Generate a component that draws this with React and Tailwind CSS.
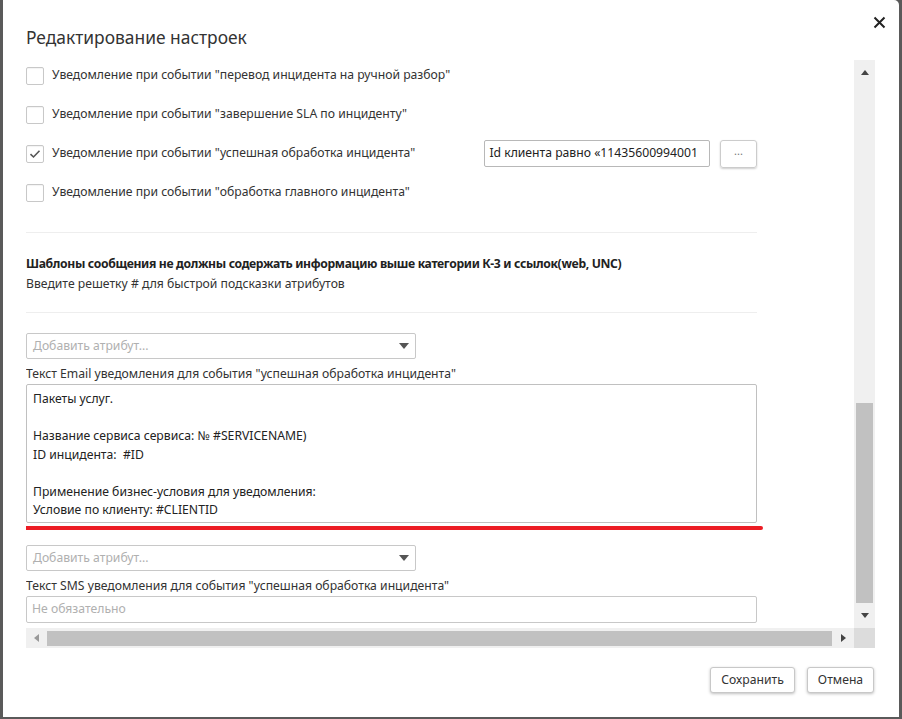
import React from "react";

const font = { fontFamily: '"Noto Sans", "Open Sans", sans-serif' };

function Checkbox({ checked }) {
  return (
    <div className="w-[18px] h-[18px] shrink-0 rounded-[2px] border border-[#c8c8c8] bg-white flex items-center justify-center shadow-[inset_0_1px_1px_rgba(0,0,0,0.05)]">
      {checked && (
        <svg width="12" height="10" viewBox="0 0 12 10">
          <path d="M1.5 5.2 L4.5 8 L10.5 1.8" fill="none" stroke="#555" strokeWidth="1.6" />
        </svg>
      )}
    </div>
  );
}

function Row({ label, checked, children }) {
  return (
    <div className="h-[39px] flex items-center">
      <Checkbox checked={checked} />
      <span className="ml-[8px] w-[425px] whitespace-nowrap">{label}</span>
      {children}
    </div>
  );
}

function SelectBox() {
  return (
    <div className="w-[390px] h-[26px] border border-[#c8c8c8] rounded-[2px] flex items-center justify-between pl-[6px] pr-[6px] text-[#b0b0b0]">
      <span>Добавить атрибут...</span>
      <svg width="10" height="6" viewBox="0 0 10 6"><path d="M0 0 H10 L5 6 Z" fill="#555" /></svg>
    </div>
  );
}

function Tri({ dir }) {
  const d = {
    up: "M0 5 L4 0 L8 5 Z",
    down: "M0 0 L8 0 L4 5 Z",
    left: "M5 0 L5 8 L0 4 Z",
    right: "M0 0 L5 4 L0 8 Z",
  }[dir];
  const vert = dir === "up" || dir === "down";
  return (
    <svg width={vert ? 8 : 5} height={vert ? 5 : 8} viewBox={vert ? "0 0 8 5" : "0 0 5 8"}>
      <path d={d} fill={dir === "left" ? "#999" : "#444"} />
    </svg>
  );
}

export default function App() {
  return (
    <div className="w-[902px] h-[719px] bg-[#5a5a5a] pl-[3px] pr-[3px] pb-[2px] text-[12.2px] text-[#333]" style={font}>
      <div className="w-full h-full bg-white rounded-tr-[5px] flex flex-col pl-[23px] pr-[24px]">
        {/* header */}
        <div className="h-[60px] flex items-start justify-between">
          <div className="mt-[24px] text-[17.4px] text-[#333] leading-[26px]">Редактирование настроек</div>
          <svg className="mt-[16px] -mr-[11px]" width="13" height="13" viewBox="0 0 13 13">
            <path d="M1.5 1.5 L11.5 11.5 M11.5 1.5 L1.5 11.5" stroke="#222" strokeWidth="2" />
          </svg>
        </div>
        {/* body */}
        <div className="flex flex-col">
          <div className="flex h-[568px]">
            <div className="w-[828px] overflow-hidden">
              <div className="w-[731px]">
                <div className="-mt-[4px]">
                  <Row label={'Уведомление при событии "перевод инцидента на ручной разбор"'} />
                  <Row label={'Уведомление при событии "завершение SLA по инциденту"'} />
                  <Row label={'Уведомление при событии "успешная обработка инцидента"'} checked>
                    <div className="ml-[8px] w-[226px] h-[27px] border border-[#b8b8b8] rounded-[2px] flex items-center px-[4px] overflow-hidden whitespace-nowrap text-[#222]">
                      Id клиента равно «11435600994001
                    </div>
                    <div className="ml-[10px] w-[37px] h-[28px] border border-[#ccc] rounded-[3px] shadow-[0_1px_2px_rgba(0,0,0,0.2)] flex items-center justify-center text-[#777] text-[11px] pb-[4px]">
                      ...
                    </div>
                  </Row>
                  <Row label={'Уведомление при событии "обработка главного инцидента"'} />
                </div>
                <div className="mt-[20px] border-t border-[#eeeeee]" />
                <div className="pt-[21px] font-bold leading-[20px] whitespace-nowrap text-[#222] tracking-[-0.35px]">
                  Шаблоны сообщения не должны содержать информацию выше категории К-3 и ссылок(web, UNC)
                </div>
                <div className="leading-[20px] whitespace-nowrap">Введите решетку # для быстрой подсказки атрибутов</div>
                <div className="mt-[18px] border-t border-[#eeeeee]" />
                <div className="mt-[20px]"><SelectBox /></div>
                <div className="mt-[5px] leading-[20px] whitespace-nowrap">Текст Email уведомления для события "успешная обработка инцидента"</div>
                <div className="h-[139px] border border-[#c0c0c0] rounded-[2px] px-[6px] pt-[5px] leading-[18.5px] text-[#222]">
                  <div>Пакеты услуг.</div>
                  <div>&nbsp;</div>
                  <div>Название сервиса сервиса: № #SERVICENAME)</div>
                  <div>ID инцидента:&nbsp; #ID</div>
                  <div>&nbsp;</div>
                  <div>Применение бизнес-условия для уведомления:</div>
                  <div>Условие по клиенту: #CLIENTID</div>
                </div>
                <div className="mt-[3px] -ml-[7px] w-[744px] h-[4px] rounded-full bg-[#ec1c24]" />
                <div className="mt-[15px]"><SelectBox /></div>
                <div className="mt-[5px] leading-[20px] whitespace-nowrap">Текст SMS уведомления для события "успешная обработка инцидента"</div>
                <div className="h-[27px] border border-[#c8c8c8] rounded-[2px] flex items-center px-[5px] text-[#b0b0b0]">Не обязательно</div>
              </div>
            </div>
            {/* vertical scrollbar */}
            <div className="w-[21px] bg-[#f0f0f0] flex flex-col items-center">
              <div className="h-[22px] flex items-center justify-center pt-[2px]"><Tri dir="up" /></div>
              <div className="flex-1 w-full flex flex-col px-[2px]">
                <div className="h-[321px]" />
                <div className="flex-1 bg-[#c1c1c1]" />
              </div>
              <div className="h-[25px] flex items-center justify-center"><Tri dir="down" /></div>
            </div>
          </div>
          {/* horizontal scrollbar */}
          <div className="flex h-[20px]">
            <div className="w-[828px] bg-[#f0f0f0] flex items-center">
              <div className="w-[21px] flex items-center justify-center"><Tri dir="left" /></div>
              <div className="w-[785px] h-[15px] bg-[#c1c1c1]" />
              <div className="flex-1 flex items-center justify-center"><Tri dir="right" /></div>
            </div>
            <div className="w-[21px] bg-[#dcdcdc]" />
          </div>
        </div>
        {/* footer */}
        <div className="flex justify-end gap-[12px] mt-[19px] pr-[1px]">
          <button className="w-[85px] h-[26px] border border-[#c8c8c8] rounded-[3px] shadow-[0_1px_3px_rgba(0,0,0,0.25)] text-[#333] bg-white">Сохранить</button>
          <button className="w-[67px] h-[26px] border border-[#c8c8c8] rounded-[3px] shadow-[0_1px_3px_rgba(0,0,0,0.25)] text-[#333] bg-white">Отмена</button>
        </div>
      </div>
    </div>
  );
}
